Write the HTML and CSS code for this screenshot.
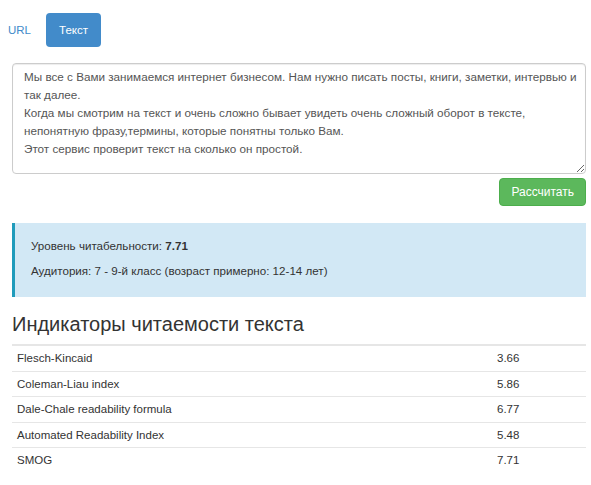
FILE: index.html
```html
<!DOCTYPE html>
<html lang="ru">
<head>
<meta charset="utf-8">
<title>Читабельность</title>
<link rel="stylesheet" href="styles.css">
</head>
<body>
<div class="page">
  <nav class="pills">
    <a class="pill" href="#">URL</a>
    <a class="pill active" href="#">Текст</a>
  </nav>
  <div class="form">
    <textarea class="text">Мы все с Вами занимаемся интернет бизнесом. Нам нужно писать посты, книги, заметки, интервью и так далее.
Когда мы смотрим на текст и очень сложно бывает увидеть очень сложный оборот в тексте, непонятную фразу,термины, которые понятны только Вам.
Этот сервис проверит текст на сколько он простой.</textarea>
    <div class="actions"><button class="btn">Рассчитать</button></div>
  </div>
  <div class="callout">
    <p>Уровень читабельности: <b>7.71</b></p>
    <p>Аудитория: 7 - 9-й класс (возраст примерно: 12-14 лет)</p>
  </div>
  <h2 class="title">Индикаторы читаемости текста</h2>
  <table class="scores">
    <tr><td class="name">Flesch-Kincaid</td><td>3.66</td></tr>
    <tr><td class="name">Coleman-Liau index</td><td>5.86</td></tr>
    <tr><td class="name">Dale-Chale readability formula</td><td>6.77</td></tr>
    <tr><td class="name">Automated Readability Index</td><td>5.48</td></tr>
    <tr><td class="name">SMOG</td><td>7.71</td></tr>
  </table>
</div>
</body>
</html>
```
FILE: styles.css
```css
html, body { margin: 0; padding: 0; background: #fff; }
body {
  font-family: "Liberation Sans", Arial, sans-serif;
  font-size: 11.6px;
  line-height: 18px;
  color: #333;
}
.page { padding: 13px 5px 0 12px; }
.pills { display: flex; gap: 2px; margin-left: -17px; }
.pill {
  display: block;
  padding: 8px 13px;
  border-radius: 4px;
  color: #428bca;
  text-decoration: none;
  font-size: 11.5px;
}
.pill.active { background: #428bca; color: #fff; }
.form { margin-top: 16px; }
.text {
  display: block;
  box-sizing: border-box;
  width: 574px;
  height: 111px;
  margin: 0;
  padding: 4px 3px 4px 11px;
  border: 1px solid #ccc;
  border-radius: 4px;
  font-family: inherit;
  font-size: 11.7px;
  line-height: 18px;
  color: #555;
  resize: vertical;
  box-shadow: inset 0 1px 1px rgba(0,0,0,.075);
}
.actions { display: flex; justify-content: flex-end; margin-top: 4px; width: 574px; }
.btn {
  height: 28px;
  padding: 0 11px;
  border: 1px solid #4cae4c;
  border-radius: 4px;
  background: #5cb85c;
  color: #fff;
  font-family: inherit;
  font-size: 12px;
}
.callout {
  margin-top: 17px;
  width: 574px;
  box-sizing: border-box;
  padding: 14px 16px 17px;
  background: #d2e8f5;
  border-left: 3px solid #1f9bbb;
}
.callout p { margin: 0; }
.callout p + p { margin-top: 7px; }
.title {
  margin: 15px 0 8px;
  font-size: 20px;
  line-height: 24px;
  font-weight: normal;
}
.scores {
  width: 574px;
  border-collapse: collapse;
  border-top: 2px solid #e6e6e6;
}
.scores td {
  padding: 4px 5px;
  line-height: 16.6px;
  font-size: 11.5px;
  border-bottom: 1px solid #e6e6e6;
}
.scores tr:last-child td { border-bottom: none; }
.scores td.name { width: 470px; }
```
